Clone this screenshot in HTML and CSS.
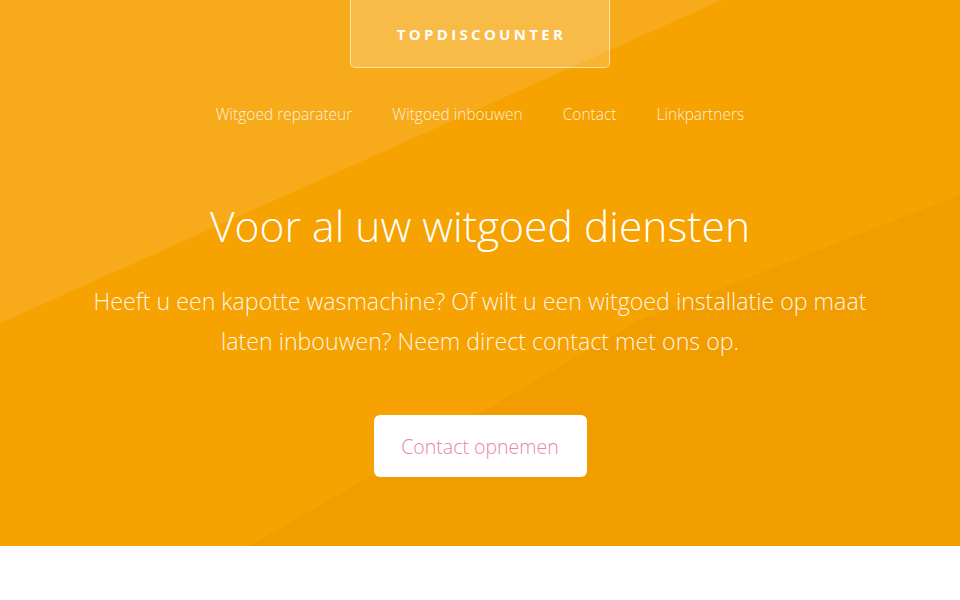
FILE: index.html
```html
<!DOCTYPE html>
<html lang="nl">
<head>
  <meta charset="UTF-8" />
  <meta name="viewport" content="width=device-width, initial-scale=1.0"/>
  <title>Topdiscounter - Witgoed diensten</title>
  <link rel="stylesheet" href="styles.css">
</head>
<body>
  <section class="hero">
    <div class="logo">Topdiscounter</div>

    <nav class="menu">
      <a href="#">Witgoed reparateur</a>
      <a href="#">Witgoed inbouwen</a>
      <a href="#">Contact</a>
      <a href="#">Linkpartners</a>
    </nav>

    <h1>Voor al uw witgoed diensten</h1>
    <p class="intro">Heeft u een kapotte wasmachine? Of wilt u een witgoed installatie op maat laten inbouwen? Neem direct contact met ons op.</p>

    <a class="cta" href="#">Contact opnemen</a>
  </section>

  <main class="content"></main>
</body>
</html>
```

FILE: styles.css
```css
body {
  margin: 0;
  font-family: "Open Sans", "Noto Sans", sans-serif;
  background: #ffffff;
}

.hero {
  position: relative;
  height: 546px;
  background: #f6a200;
  display: flex;
  flex-direction: column;
  align-items: center;
  color: #ffffff;
  overflow: hidden;
}

/* diagonal light / shade planes */
.hero::before,
.hero::after {
  content: "";
  position: absolute;
  inset: 0;
  pointer-events: none;
}

.hero::before {
  background: rgba(255, 255, 255, 0.1);
  clip-path: polygon(0 0, 75.2% 0, 0 59.2%);
}

.hero::after {
  background: rgba(200, 120, 0, 0.1);
  clip-path: polygon(100% 35.7%, 100% 100%, 26% 100%, 66.7% 58.6%);
}

.hero > * {
  position: relative;
  z-index: 1;
}

.logo {
  box-sizing: border-box;
  width: 260px;
  height: 68px;
  border: 1px solid rgba(255, 255, 255, 0.55);
  border-top: none;
  border-radius: 0 0 5px 5px;
  background: rgba(255, 255, 255, 0.2);
  display: flex;
  align-items: center;
  justify-content: center;
  font-weight: 700;
  font-size: 15px;
  letter-spacing: 3.3px;
  text-transform: uppercase;
  padding-left: 3px;
}

.menu {
  margin-top: 34px;
  display: flex;
  gap: 40px;
}

.menu a {
  color: rgba(255, 255, 255, 0.85);
  text-decoration: none;
  font-weight: 300;
  font-size: 15.5px;
  line-height: 24px;
}

h1 {
  margin: 69px 0 0;
  font-weight: 300;
  font-size: 42.6px;
  line-height: 60px;
}

.intro {
  margin: 26px 0 0;
  width: 800px;
  text-align: center;
  font-weight: 300;
  font-size: 23.2px;
  line-height: 40px;
  color: rgba(255, 255, 255, 0.92);
}

.cta {
  margin-top: 54px;
  box-sizing: border-box;
  width: 213px;
  height: 62px;
  display: flex;
  align-items: center;
  justify-content: center;
  background: #ffffff;
  border-radius: 6px;
  color: #e8879b;
  text-decoration: none;
  font-weight: 300;
  font-size: 19.5px;
}

.content {
  height: 54px;
}
```
